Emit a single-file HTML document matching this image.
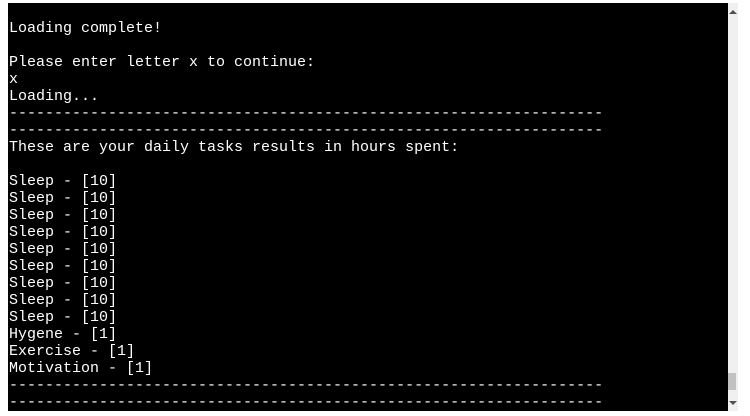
<!DOCTYPE html>
<html><head><style>
html,body{margin:0;padding:0;background:#fff;width:750px;height:416px;overflow:hidden}
#term{position:absolute;left:8px;top:3px;width:720px;height:408px;background:#000;overflow:hidden}
pre{margin:0;padding:0 0 0 1px;color:#fff;font-family:"Liberation Mono",monospace;font-size:15px;line-height:17px}
#sb{position:absolute;left:728px;top:3px;width:10px;height:408px;background:#f0f0f0}
#th{position:absolute;left:728px;top:373px;width:8px;height:17px;background:#c1c1c1}
.ar{position:absolute;left:729px;width:0;height:0;border-left:4px solid transparent;border-right:4px solid transparent}
</style></head><body>
<div id="term"><pre>

Loading complete!

Please enter letter x to continue:
x
Loading...
------------------------------------------------------------------
------------------------------------------------------------------
These are your daily tasks results in hours spent:

Sleep - [10]
Sleep - [10]
Sleep - [10]
Sleep - [10]
Sleep - [10]
Sleep - [10]
Sleep - [10]
Sleep - [10]
Sleep - [10]
Hygene - [1]
Exercise - [1]
Motivation - [1]
------------------------------------------------------------------
------------------------------------------------------------------
</pre></div>
<div id="sb"></div>
<div id="th"></div>
<div class="ar" style="top:10px;border-bottom:4px solid #505050"></div>
<div class="ar" style="top:401px;border-top:4px solid #505050"></div>
</body></html>
